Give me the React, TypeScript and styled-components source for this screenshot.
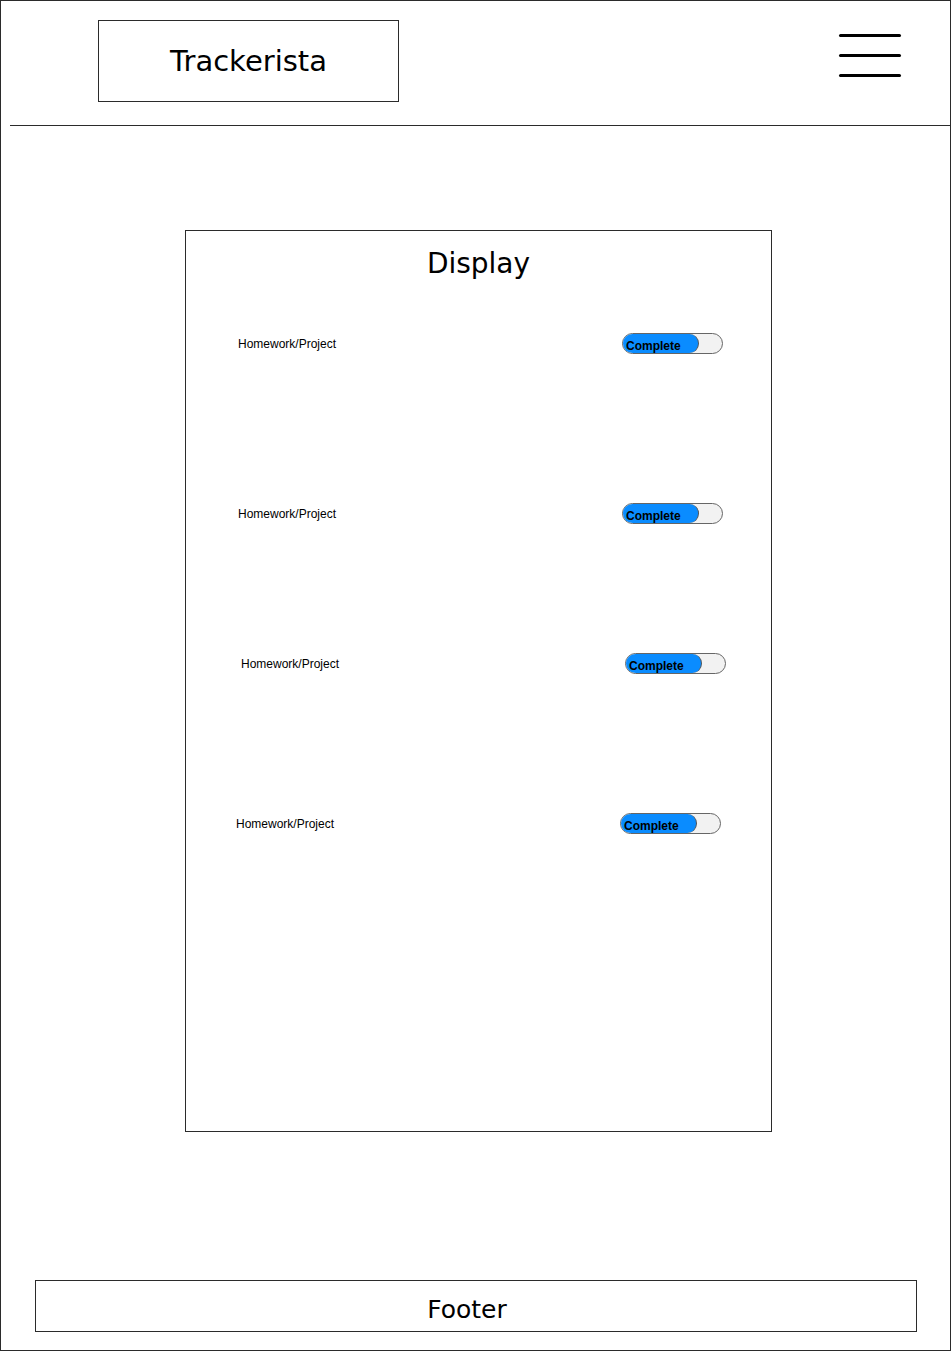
import React from "react";
import styled, { createGlobalStyle } from "styled-components";

const Global = createGlobalStyle`
  html, body { margin: 0; padding: 0; background: #ffffff; }
  * { box-sizing: border-box; }
`;

const Frame = styled.div`
  width: 951px;
  height: 1351px;
  border: 1px solid #2b2b2b;
  display: flex;
  flex-direction: column;
  background: #fff;
`;

const Header = styled.header`
  height: 124px;
  display: flex;
  align-items: flex-start;
  justify-content: space-between;
  padding: 19px 49px 0 97px;
`;

const LogoBox = styled.div`
  width: 301px;
  height: 82px;
  border: 1px solid #2b2b2b;
  display: flex;
  align-items: center;
  justify-content: center;
  font-family: "DejaVu Sans", sans-serif;
  font-size: 29px;
  color: #000;
`;

const Burger = styled.div`
  margin-top: 14px;
  display: flex;
  flex-direction: column;
  gap: 17px;
`;

const BurgerLine = styled.span`
  display: block;
  width: 62px;
  height: 3px;
  background: #000;
  border-radius: 2px;
`;

const Divider = styled.div`
  margin-left: 9px;
  border-top: 1px solid #2b2b2b;
`;

const Panel = styled.section`
  margin: 104px 0 0 184px;
  width: 587px;
  height: 902px;
  border: 1px solid #2b2b2b;
  display: flex;
  flex-direction: column;
`;

const PanelTitle = styled.h1`
  margin: 16px 0 0;
  text-align: center;
  font-family: "DejaVu Sans", sans-serif;
  font-weight: normal;
  font-size: 28px;
  line-height: 34px;
  color: #000;
`;

const Row = styled.div<{ $top: number; $shift: number }>`
  margin-top: ${(p) => p.$top}px;
  margin-left: ${(p) => 52 + p.$shift}px;
  height: 21px;
  display: grid;
  grid-template-columns: 384px 101px;
  align-items: center;
`;

const ItemLabel = styled.span`
  font-family: "Liberation Sans", Arial, sans-serif;
  font-size: 12px;
  color: #000;
`;

const Toggle = styled.div`
  position: relative;
  width: 101px;
  height: 21px;
  border: 1px solid #666;
  border-radius: 11px;
  background: #f2f2f2;
  overflow: hidden;
`;

const ToggleFill = styled.div`
  width: 76px;
  height: 100%;
  background: #0a8cff;
  border-right: 1px solid #555;
  border-radius: 0 10px 10px 0;
  display: flex;
  align-items: flex-end;
  padding: 0 0 0 3px;
  font-family: "Liberation Sans", Arial, sans-serif;
  font-weight: bold;
  font-size: 12px;
  line-height: 14px;
  color: #000;
`;

const Footer = styled.footer`
  margin: auto 0 18px 34px;
  width: 882px;
  height: 52px;
  border: 1px solid #2b2b2b;
  display: flex;
  align-items: center;
  justify-content: center;
  padding: 7px 18px 0 0;
  font-family: "DejaVu Sans", sans-serif;
  font-size: 25px;
  color: #000;
`;

const rows = [
  { top: 52, shift: 0 },
  { top: 149, shift: 0 },
  { top: 129, shift: 3 },
  { top: 139, shift: -2 },
];

export default function App() {
  return (
    <>
      <Global />
      <Frame>
        <Header>
          <LogoBox>Trackerista</LogoBox>
          <Burger>
            <BurgerLine />
            <BurgerLine />
            <BurgerLine />
          </Burger>
        </Header>
        <Divider />
        <Panel>
          <PanelTitle>Display</PanelTitle>
          {rows.map((r, i) => (
            <Row key={i} $top={r.top} $shift={r.shift}>
              <ItemLabel>Homework/Project</ItemLabel>
              <Toggle>
                <ToggleFill>Complete</ToggleFill>
              </Toggle>
            </Row>
          ))}
        </Panel>
        <Footer>Footer</Footer>
      </Frame>
    </>
  );
}
